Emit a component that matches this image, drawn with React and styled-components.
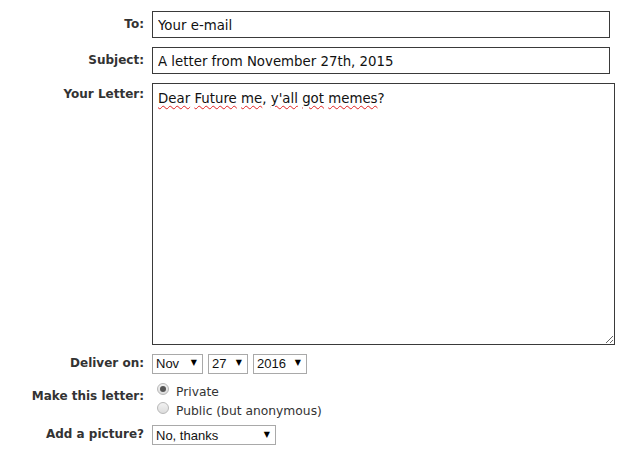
import React from "react";
import styled, { createGlobalStyle } from "styled-components";

const GlobalStyle = createGlobalStyle`
  body {
    margin: 0;
    background: #fff;
    font-family: "DejaVu Sans", Verdana, sans-serif;
    color: #333;
  }
`;

const Form = styled.form`
  display: grid;
  grid-template-columns: 144px auto;
  column-gap: 8px;
  row-gap: 9px;
  padding-top: 11px;
  align-items: start;
`;

const Label = styled.label`
  text-align: right;
  font-weight: bold;
  font-size: 12px;
  line-height: 15px;
  color: #333;
  padding-top: ${(p) => p.$top || 0}px;
`;

const TextField = styled.input`
  box-sizing: border-box;
  width: 458px;
  height: 27px;
  margin: 0;
  padding: 1px 5px 0;
  border: 1px solid #3a3a3a;
  font-family: "DejaVu Sans", Verdana, sans-serif;
  font-size: 13.33px;
  color: #111;
  outline: none;
`;

const LetterBox = styled.div`
  box-sizing: border-box;
  width: 463px;
  height: 262px;
  padding: 7px 5px;
  border: 1px solid #3a3a3a;
  font-size: 13.33px;
  line-height: 16px;
  color: #111;
  resize: both;
  overflow: auto;
  white-space: pre-wrap;
`;

const Misspelled = styled.span`
  text-decoration: underline wavy #e02020;
  text-decoration-thickness: 1px;
  text-underline-offset: 2px;
`;

const SelectRow = styled.div`
  display: flex;
  gap: 5px;
  margin-top: -1px;
`;

const SelectWrap = styled.div`
  position: relative;
  width: ${(p) => p.$w}px;
`;

const Select = styled.select`
  appearance: none;
  box-sizing: border-box;
  width: 100%;
  height: 20px;
  margin: 0;
  padding: 0 0 0 3px;
  border: 1px solid #a9a9a9;
  border-radius: 0;
  background: #fff;
  font-family: "Liberation Sans", Arial, sans-serif;
  font-size: 13px;
  color: #111;
  outline: none;
`;

const Arrow = styled.span`
  position: absolute;
  right: 6px;
  top: 4px;
  font-size: 8px;
  line-height: 12px;
  color: #000;
  pointer-events: none;
  font-family: "DejaVu Sans", sans-serif;
`;

const RadioGroup = styled.div`
  display: flex;
  flex-direction: column;
  gap: 4px;
  padding-left: 5px;
  margin: 2px 0 -3px;
`;

const RadioLine = styled.label`
  display: flex;
  align-items: center;
  gap: 7px;
  font-size: 12.3px;
  line-height: 15px;
  color: #333;
`;

const Radio = styled.input`
  appearance: none;
  box-sizing: border-box;
  width: 12px;
  height: 12px;
  margin: 0;
  border: 1px solid #b8b8b8;
  border-radius: 50%;
  background: linear-gradient(#f2f2f2, #dcdcdc);
  position: relative;
  top: -3px;

  &:checked::after {
    content: "";
    position: absolute;
    left: 2px;
    top: 2px;
    width: 6px;
    height: 6px;
    border-radius: 50%;
    background: #555;
  }
`;

const Dropdown = ({ width, value, options }) => (
  <SelectWrap $w={width}>
    <Select defaultValue={value}>
      {options.map((o) => (
        <option key={o}>{o}</option>
      ))}
    </Select>
    <Arrow>▼</Arrow>
  </SelectWrap>
);

const App = () => {
  return (
    <>
      <GlobalStyle />
      <Form>
        <Label $top={6}>To:</Label>
        <TextField defaultValue="Your e-mail" />

        <Label $top={6}>Subject:</Label>
        <TextField defaultValue="A letter from November 27th, 2015" />

        <Label $top={4}>Your Letter:</Label>
        <LetterBox contentEditable suppressContentEditableWarning>
          <Misspelled>Dear</Misspelled> <Misspelled>Future</Misspelled>{" "}
          <Misspelled>me</Misspelled>, <Misspelled>y'all</Misspelled>{" "}
          <Misspelled>got</Misspelled> <Misspelled>memes</Misspelled>?
        </LetterBox>

        <Label $top={2}>Deliver on:</Label>
        <SelectRow>
          <Dropdown width={51} value="Nov" options={["Oct", "Nov", "Dec"]} />
          <Dropdown width={40} value="27" options={["26", "27", "28"]} />
          <Dropdown width={54} value="2016" options={["2016", "2017"]} />
        </SelectRow>

        <Label $top={6}>Make this letter:</Label>
        <RadioGroup>
          <RadioLine>
            <Radio type="radio" name="vis" defaultChecked />
            Private
          </RadioLine>
          <RadioLine>
            <Radio type="radio" name="vis" />
            Public (but anonymous)
          </RadioLine>
        </RadioGroup>

        <Label $top={2}>Add a picture?</Label>
        <Dropdown width={124} value="No, thanks" options={["No, thanks", "Yes"]} />
      </Form>
    </>
  );
};

export default App;
